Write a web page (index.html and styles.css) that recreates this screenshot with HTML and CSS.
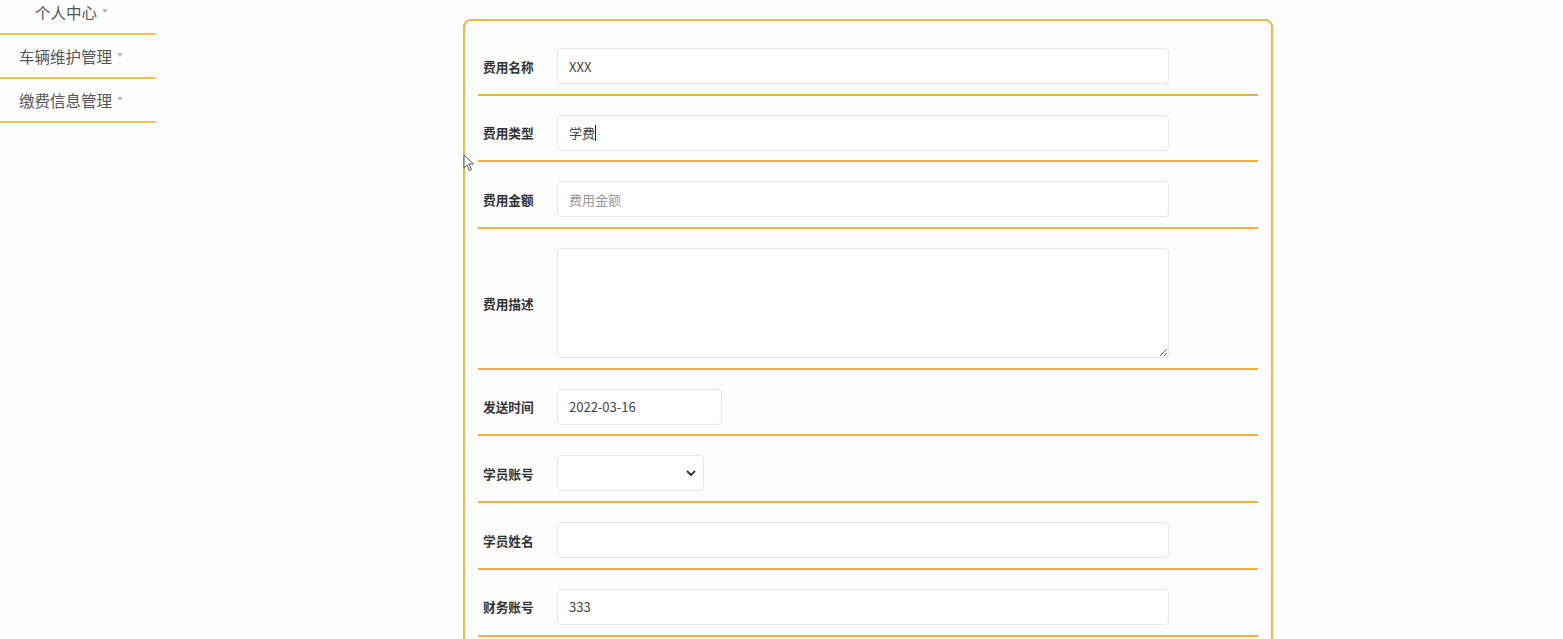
FILE: index.html
```html
<!DOCTYPE html>
<html lang="zh">
<head>
<meta charset="utf-8">
<title>缴费信息</title>
<link rel="stylesheet" href="styles.css">
</head>
<body>
<div class="page">
  <aside class="sidebar">
    <div class="nav-item nav-first">个人中心<span class="caret"></span></div>
    <div class="nav-item">车辆维护管理<span class="caret"></span></div>
    <div class="nav-item">缴费信息管理<span class="caret"></span></div>
  </aside>
  <main class="main">
    <form class="card">
      <div class="row">
        <label class="label">费用名称</label>
        <input class="field" type="text" value="XXX">
      </div>
      <div class="row">
        <label class="label">费用类型</label>
        <div class="field field-static">学费<span class="caret-line"></span></div>
      </div>
      <div class="row">
        <label class="label">费用金额</label>
        <input class="field" type="text" placeholder="费用金额">
      </div>
      <div class="row">
        <label class="label">费用描述</label>
        <textarea class="field area"></textarea>
      </div>
      <div class="row">
        <label class="label">发送时间</label>
        <input class="field date" type="text" value="2022-03-16">
      </div>
      <div class="row">
        <label class="label">学员账号</label>
        <div class="select-wrap">
          <select class="field select"><option></option></select>
          <svg class="chev" width="10" height="7" viewBox="0 0 10 7"><path d="M1.5 1.5 L5 5 L8.5 1.5" fill="none" stroke="#333" stroke-width="1.8" stroke-linecap="round" stroke-linejoin="round"/></svg>
        </div>
      </div>
      <div class="row">
        <label class="label">学员姓名</label>
        <input class="field" type="text">
      </div>
      <div class="row">
        <label class="label">财务账号</label>
        <input class="field" type="text" value="333">
      </div>
    </form>
  </main>
  <svg class="cursor" width="12" height="18" viewBox="0 0 12 18"><path d="M1 1 L1 14 L4 11 L6.5 16.5 L8.5 15.5 L6 10 L10.5 10 Z" fill="#fff" stroke="#555" stroke-width="1"/></svg>
</div>
</body>
</html>
```
FILE: styles.css
```css
html, body {
  margin: 0;
  padding: 0;
  background: #fdfdfd;
  overflow: hidden;
  height: 639px;
}
body {
  font-family: "Noto Sans CJK SC", "Liberation Sans", sans-serif;
  color: #555;
}
.page {
  display: flex;
  position: relative;
  height: 639px;
  overflow: hidden;
}
.sidebar {
  width: 156px;
  flex: none;
}
.nav-item {
  height: 42px;
  padding-left: 19px;
  font-size: 15.5px;
  color: #555;
  border-bottom: 2px solid #f5c443;
  display: flex;
  align-items: center;
}
.nav-first {
  margin-top: -9px;
  padding-left: 35px;
}
.caret {
  display: inline-block;
  width: 0;
  height: 0;
  margin-left: 5px;
  border-left: 3.5px solid transparent;
  border-right: 3.5px solid transparent;
  border-top: 4px solid #bbb;
  margin-top: -2px;
}
.main {
  flex: 1;
  padding-left: 307px;
}
.card {
  margin: 19px 0 0;
  width: 780px;
  border: 2px solid #f1b547;
  border-radius: 8px;
  padding: 8px 13px 60px;
  background: #fdfdfd;
}
.row {
  display: flex;
  align-items: center;
  padding: 19px 0 9.7px;
  border-bottom: 2px solid #f0b03e;
}
.label {
  width: 74px;
  padding-left: 5px;
  flex: none;
  font-size: 12.7px;
  font-weight: bold;
  color: #333;
}
.field {
  box-sizing: border-box;
  width: 612px;
  height: 36px;
  border: 1px solid #e6e6e6;
  border-radius: 4px;
  background: #fff;
  padding: 0 11px;
  font-family: "Noto Sans CJK SC", "Liberation Sans", sans-serif;
  font-size: 13px;
  color: #444;
  outline: none;
  margin: 0;
}
.field::placeholder {
  color: #999;
}
.field-static {
  display: flex;
  align-items: center;
}
.caret-line {
  display: inline-block;
  width: 1px;
  height: 16px;
  background: #222;
}
.area {
  height: 110px;
  resize: vertical;
  padding: 6px 11px;
}
.date {
  width: 165px;
}
.select-wrap {
  position: relative;
  width: 147px;
  height: 36px;
}
.select {
  width: 147px;
  appearance: none;
  -webkit-appearance: none;
}
.chev {
  position: absolute;
  right: 8px;
  top: 15px;
  pointer-events: none;
}
.cursor {
  position: absolute;
  left: 463px;
  top: 154px;
}
```
